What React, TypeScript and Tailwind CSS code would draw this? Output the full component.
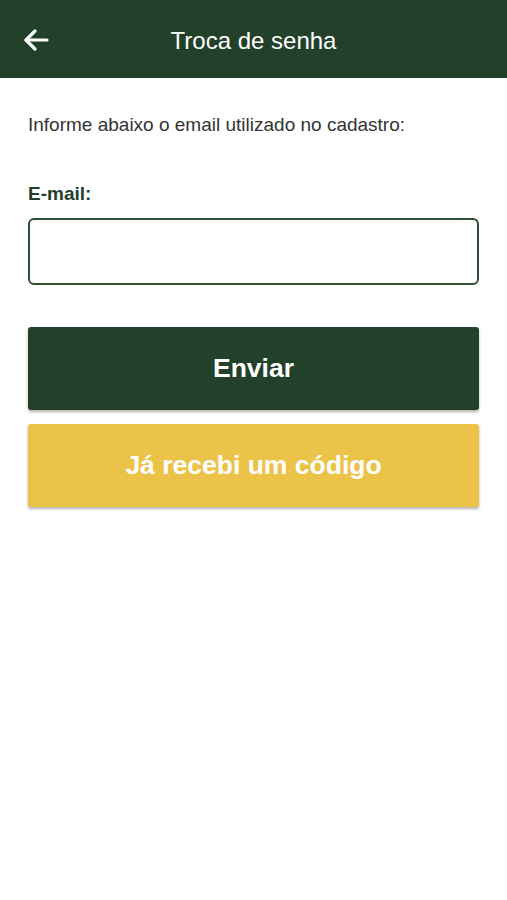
export default function App() {
  return (
    <div className="flex h-[900px] w-full flex-col bg-white font-['Liberation_Sans',Arial,sans-serif]">
      <header className="relative flex h-[78px] shrink-0 items-center justify-center bg-[#22402a]">
        <button className="absolute left-[22px] top-[27px] text-white">
          <svg width="28" height="26" viewBox="0 0 28 26" fill="none" stroke="currentColor" strokeWidth="3.2" strokeLinecap="round" strokeLinejoin="round">
            <path d="M25 13H4" />
            <path d="M13 4L4 13l9 9" />
          </svg>
        </button>
        <h1 className="pt-[4px] text-[24px] font-normal text-white">Troca de senha</h1>
      </header>
      <main className="flex flex-col px-[28px] pt-[35px]">
        <p className="text-[19px] leading-[24px] text-[#333]">Informe abaixo o email utilizado no cadastro:</p>
        <label className="mt-[45px] text-[19px] font-bold leading-[24px] text-[#22402a]">E-mail:</label>
        <input type="email" className="mt-[12px] h-[67px] w-full rounded-[6px] border-2 border-[#2d4f33] px-3 text-[19px] outline-none" />
        <button className="mt-[42px] h-[83px] w-full rounded-[3px] bg-[#22402a] text-[26.5px] font-bold text-white shadow-[0_2px_3px_rgba(0,0,0,0.3)]">Enviar</button>
        <button className="mt-[14px] h-[83px] w-full rounded-[3px] bg-[#ecc349] text-[26.5px] font-bold text-white shadow-[0_2px_3px_rgba(0,0,0,0.3)]">Já recebi um código</button>
      </main>
    </div>
  );
}
